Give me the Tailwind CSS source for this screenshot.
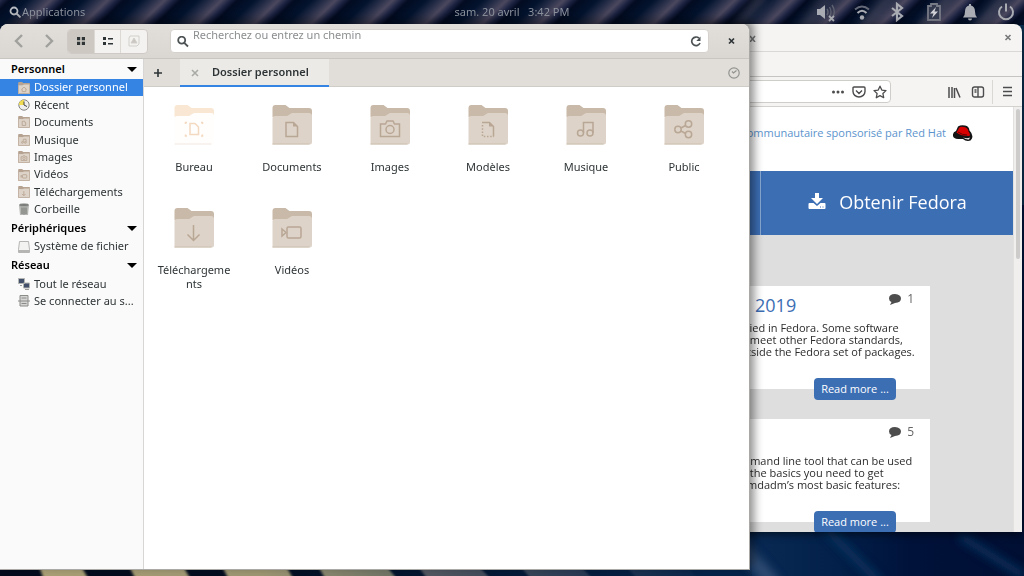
<!DOCTYPE html>
<html lang="fr">
<head>
    <meta charset="UTF-8">
    <meta name="viewport" content="width=device-width, initial-scale=1.0">
    <title>Dossier personnel</title>
    <script src="https://cdn.jsdelivr.net/npm/@tailwindcss/browser@4"></script>
</head>
<body class="relative h-screen overflow-hidden bg-[#00123a] font-['Noto_Sans','Open_Sans',sans-serif] text-[11px] text-[#2e3436]">

    <!-- Wallpaper -->
    <svg class="absolute inset-0 w-full h-full" viewBox="0 0 1024 576" preserveAspectRatio="none" aria-hidden="true">
        <defs>
            <linearGradient id="stripe"><stop offset="0" stop-color="#020b20"/><stop offset=".3" stop-color="#03132e"/><stop offset=".5" stop-color="#232b45"/><stop offset=".72" stop-color="#4b485f"/><stop offset=".88" stop-color="#1a2140"/><stop offset="1" stop-color="#020b20"/></linearGradient>
            <pattern id="top" width="57" height="60" patternUnits="userSpaceOnUse" patternTransform="translate(10 0) skewX(-46)"><rect width="57" height="60" fill="url(#stripe)"/></pattern>
            <linearGradient id="fade"><stop offset="0" stop-color="#052349" stop-opacity="0"/><stop offset=".35" stop-color="#052349" stop-opacity=".1"/><stop offset=".95" stop-color="#052349"/></linearGradient>
            <linearGradient id="navy"><stop offset="0" stop-color="#0a2a55"/><stop offset=".35" stop-color="#022049"/><stop offset=".6" stop-color="#00123a"/><stop offset="1" stop-color="#000f33"/></linearGradient>
            <filter id="soft"><feGaussianBlur stdDeviation="5"/></filter>
            <filter id="edge"><feGaussianBlur stdDeviation="1.5 0"/></filter>
        </defs>
        <rect x="740" y="300" width="284" height="276" fill="url(#navy)"/>
        <rect width="1024" height="40" fill="url(#top)"/>
        <rect x="1010" y="25" width="14" height="180" fill="#0b3050"/>
        <rect y="560" width="752" height="16" fill="#030b1c"/>
        <g filter="url(#edge)" fill="#aca176">
            <path d="M39 566h42l8 14H44zM129 566h54l8 14h-55zM222 566h64l8 14h-65zM318 566h68l12 14h-72z"/>
            <path d="M418 566h60l14 14h-64zM520 566h60l14 14h-62zM626 566h60l14 14h-62z" fill="#8b7c70"/>
        </g>
        <rect y="560" width="752" height="16" fill="url(#fade)"/>
        <g filter="url(#soft)" fill="none" stroke-width="7">
            <path d="M735 540l40 45" stroke="#48658a" stroke-width="14" opacity=".6"/>
            <path d="M825 528l55 55M960 536l64 40" stroke="#0c3560"/>
            <path d="M735 30l30-36M800 30l30-36M860 30l30-36M920 30l30-36M975 30l30-36" stroke="#766b78" opacity=".5"/>
        </g>
    </svg>

    <!-- Top bar -->
    <header class="relative flex items-center justify-between h-6 px-2 text-[#8f95a0]">
        <button class="flex items-center">
            <svg class="w-3.5 h-3" viewBox="0 0 14 12" fill="none" stroke="#b8bbc0" stroke-width="1.8"><circle cx="6" cy="5" r="3.500"/><path d="M8.500 7.500L12.500 11.500"/></svg>
            <span>Applications</span>
        </button>
        <p class="absolute left-1/2 -translate-x-1/2 whitespace-pre">sam. 20 avril   3:42 PM</p>
        <div class="flex items-center gap-4 text-[#a9acb2]">
            <svg class="w-5 h-5" viewBox="0 0 20 20" fill="currentColor"><path d="M1 7h3l5-4v14l-5-4H1z"/><path d="M11 7q2 3 0 6M13.500 5q3 5 0 10M16 3q4 6 1 12" fill="none" stroke="#5e6270" stroke-width="1.400"/><path d="M13 14l5 5M18 14l-5 5" stroke="currentColor" stroke-width="1.800"/></svg>
            <svg class="w-5 h-5" viewBox="0 0 20 20" fill="none" stroke="currentColor" stroke-width="2"><path d="M3 7.500q7-6 14 0" stroke="#656977"/><path d="M5.500 11q4.500-4.500 9 0"/><circle cx="10" cy="15.500" r="2.200" fill="currentColor" stroke="none"/></svg>
            <svg class="w-5 h-5" viewBox="0 0 20 20" fill="none" stroke="currentColor" stroke-width="2.200"><path d="M4 6l10 8-5 4V2l5 4-10 8"/></svg>
            <svg class="w-5 h-5" viewBox="0 0 20 20"><path d="M4 4h3V2h6v2h3v14H4z" fill="#343b4e" stroke="#777b86" stroke-width="1.800"/><path d="M12 5l-6 6.500h3.500L8 16l6-6.500h-3.500z" fill="#d0d2d6"/></svg>
            <svg class="w-5 h-5" viewBox="0 0 20 20" fill="currentColor"><path d="M9 2h2v1.500q4 1 4 6 0 4 2 6H3q2-2 2-6 0-5 4-6zM8 16.500h4q0 2-2 2t-2-2z"/></svg>
            <svg class="w-5 h-5" viewBox="0 0 20 20" fill="none" stroke="currentColor" stroke-width="2"><path d="M6 4.500a7 7 0 1 0 8 0M10 1.500v8"/></svg>
        </div>
    </header>

    <!-- Firefox window -->
    <section class="absolute left-[700px] right-[2px] top-6 bottom-[44px] flex flex-col overflow-hidden rounded-t-lg bg-[#f5f4f2] shadow-[0_2px_8px_rgba(0,0,0,.6)]">
        <div class="flex items-center justify-between h-7 shrink-0 border-b border-[#dad8d5] pl-[49px] pr-2.5">
            <button aria-label="Fermer l'onglet"><svg class="w-2 h-2" viewBox="0 0 8 8" stroke="#77797a" stroke-width="1.500"><path d="M1 2l5 6M6 2L1 8"/></svg></button>
            <button aria-label="Fermer"><svg class="w-2 h-2" viewBox="0 0 8 8" stroke="#77797a" stroke-width="1.600"><path d="M1.500 1l5 5M6.500 1l-5 5"/></svg></button>
        </div>
        <div class="h-[25px] shrink-0 border-b border-[#c6c4c1]"></div>
        <div class="flex items-center h-[30px] shrink-0 border-b border-[#d3d1ce] text-[#4c4c4e]">
            <div class="flex items-center justify-end gap-[7px] w-[191px] h-[23px] border border-[#cfcdca] rounded bg-white pr-[3px]">
                <svg class="w-3.5 h-3.5" viewBox="0 0 14 14" fill="currentColor"><circle cx="2.500" cy="7" r="1.500"/><circle cx="7" cy="7" r="1.500"/><circle cx="11.500" cy="7" r="1.500"/></svg>
                <svg class="w-3.5 h-3.5" viewBox="0 0 14 14" fill="none" stroke="currentColor" stroke-width="1.400"><path d="M2 2h10q1 0 1 1v3.500a6 5.500 0 0 1-12 0V3q0-1 1-1zM4 5.500l3 3 3-3"/></svg>
                <svg class="w-3.5 h-3.5" viewBox="0 0 14 14" fill="none" stroke="currentColor" stroke-width="1.300" stroke-linejoin="round"><path d="M7 1.200l1.800 3.900 4.200.5-3.100 2.900.8 4.200L7 10.600l-3.700 2.100.8-4.200L1 5.600l4.200-.5z"/></svg>
            </div>
            <div class="flex-1 flex items-center justify-end gap-2.5 h-full pr-[7px]">
                <svg class="w-3.5 h-3.5" viewBox="0 0 14 14" fill="none" stroke="currentColor" stroke-width="1.500"><path d="M2 2v11M5 2v11M7.500 3v10M9 3l4 9.500"/></svg>
                <svg class="w-3.5 h-3.5" viewBox="0 0 14 14" fill="none" stroke="currentColor" stroke-width="1.400"><rect x="1.500" y="2" width="11" height="10" rx="2"/><path d="M7 2v10M3.500 5h2M3.500 7h2"/></svg>
            </div>
            <button class="flex items-center justify-center w-[30px] h-6 border-l border-[#dad8d5]" aria-label="Menu"><svg class="w-3 h-3" viewBox="0 0 12 12" stroke="currentColor" stroke-width="1.500"><path d="M1 1.500h9M1 5.500h9M1 9.500h9"/></svg></button>
        </div>

        <div class="flex flex-1 min-h-0 font-['Open_Sans','Noto_Sans',sans-serif] text-[#2b2b2b]">
            <main class="flex-1 overflow-hidden bg-[#dedede]">
                <div class="flex items-center justify-end gap-[7px] h-16 bg-white pr-10 pb-3">
                    <a href="#" class="whitespace-nowrap text-[#5c94cd]">communautaire sponsorisé par Red Hat</a>
                    <svg class="w-5 h-4" viewBox="0 0 20 16"><path d="M0 11Q-.5 7 3 6L5 1.500q3-2 7-1 4 .5 4.500 5 4 4 2.500 8-1 2.500-4 2.500-3 0-5-2H5q-4.500-.5-5-3z" fill="#141414"/><path d="M3.500 7.500L6 3q1-2 5-1 4 .5 4.500 4.500 2 2 1 4.500-9 0-13-3.500z" fill="#d90000"/><path d="M5 7q4 3 9 3" fill="none" stroke="#600"/><path d="M10 12.500q4 1.500 7 0l-1 2q-3 .5-6-2z" fill="#e8e8e8"/></svg>
                </div>
                <div class="flex h-16 bg-[#3c6eb4] text-white">
                    <div class="w-[61px] border-r border-[#88a8d2]"></div>
                    <a href="#" class="flex-1 flex items-center justify-center gap-3 text-[18px] pb-0.5">
                        <svg class="w-5 h-5" viewBox="0 0 20 20" fill="currentColor"><path d="M8 1h4v5h4l-6 6-6-6h4z"/><path fill-rule="evenodd" d="M2.500 11h4l3.500 3 3.500-3h4q1 0 1 1v4q0 1-1 1h-15q-1 0-1-1v-4q0-1 1-1zM13 14.500v1h1v-1zM15.500 14.500v1h1v-1z"/></svg>
                        <span>Obtenir Fedora</span>
                    </a>
                </div>
                <div class="flex flex-col gap-[30px] w-[230px] pt-[51px]">
                    <article class="relative h-[103px] bg-white pl-[47px] pt-1.5">
                        <div class="flex items-start justify-between h-[30px] pr-4">
                            <h2 class="pl-2 pt-0.5 text-[18px] leading-[22px] text-[#3c6eb4]">2019</h2>
                            <p class="flex items-center gap-1.5 text-[12px] leading-[14px] text-[#666]">
                                <svg class="w-3 h-3" viewBox="0 0 12 12" fill="#4d4d4d"><path d="M6 1q6 .5 6 4.500T6 10L1 12l1.500-3Q0 8 0 5.500 0 1 6 1z"/></svg>
                                1
                            </p>
                        </div>
                        <p class="-indent-[2px] whitespace-nowrap leading-3">ried in Fedora. Some software<br>&nbsp;meet other Fedora standards,<br>tside the Fedora set of packages.</p>
                        <a href="#" class="absolute right-[34px] -bottom-[11px] flex items-center justify-center w-[82px] h-[22px] rounded bg-[#3c6eb4] text-white">Read more ...</a>
                    </article>
                    <article class="relative h-[103px] bg-white pl-[47px] pt-1.5">
                        <div class="flex items-start justify-end h-[30px] pr-4">
                            <p class="flex items-center gap-1.5 text-[12px] leading-[14px] text-[#666]">
                                <svg class="w-3 h-3" viewBox="0 0 12 12" fill="#4d4d4d"><path d="M6 1q6 .5 6 4.500T6 10L1 12l1.500-3Q0 8 0 5.500 0 1 6 1z"/></svg>
                                5
                            </p>
                        </div>
                        <p class="-indent-[7px] whitespace-nowrap leading-3">mmand line tool that can be used<br>&nbsp;the basics you need to get<br>mdadm’s most basic features:</p>
                        <a href="#" class="absolute right-[34px] -bottom-[11px] flex items-center justify-center w-[82px] h-[22px] rounded bg-[#3c6eb4] text-white">Read more ...</a>
                    </article>
                </div>
            </main>
            <div class="w-[9px] border-l border-[#e2e1df] bg-[#f0efed] px-0.5 pt-0.5">
                <div class="h-[150px] rounded-full bg-[#cdcccb]"></div>
            </div>
        </div>
    </section>

    <!-- Files window -->
    <section class="absolute left-0 w-[750px] top-6 bottom-1.5 flex flex-col overflow-hidden rounded-t-lg bg-white border-r border-b border-[#aaa9a6] shadow-[4px_-4px_10px_rgba(0,0,0,.45)]">
        <div class="flex items-center h-[35px] shrink-0 border-b border-[#c9c5c0] bg-linear-to-b from-[#e2dfdb] to-[#dad6d2] pl-[11px] pr-2.5">
            <div class="flex gap-3.5 text-[#a0a09d]">
                <button aria-label="Précédent"><svg class="w-4 h-4" viewBox="0 0 16 16" fill="none" stroke="currentColor" stroke-width="2.400"><path d="M11 2L5 8l6 6"/></svg></button>
                <button aria-label="Suivant"><svg class="w-4 h-4" viewBox="0 0 16 16" fill="none" stroke="currentColor" stroke-width="2.400"><path d="M5 2l6 6-6 6"/></svg></button>
            </div>
            <div class="flex h-[25px] ml-[10px] w-[81px] rounded border border-[#cfcac5] bg-[#f3f2f0] overflow-hidden">
                <button class="flex-1 flex items-center justify-center bg-[#cec8c2]" aria-label="Grille"><svg class="w-2 h-2" viewBox="0 0 8 8" fill="#2e3436"><path d="M0 0h3.200v3.200H0zM4.800 0H8v3.200H4.800zM0 4.800h3.200V8H0zM4.800 4.800H8V8H4.800z"/></svg></button>
                <button class="flex-1 flex items-center justify-center border-x border-[#dcd8d4]" aria-label="Liste"><svg class="w-2.5 h-2" viewBox="0 0 10 8" fill="#2e3436"><path d="M0 0h3v3H0zM0 5h3v3H0zM5 1h5v1.500H5zM5 6h5v1.500H5z"/></svg></button>
                <button class="flex-1 flex items-center justify-center" aria-label="Colonnes"><svg class="w-3 h-3" viewBox="0 0 12 12" fill="none" stroke="#d2cfcb"><path d="M2 1h9v8l-2 2H1V3z"/><path d="M6 3l3 5H3z" fill="#c9c6c2"/></svg></button>
            </div>
            <label class="flex-1 relative flex items-start h-6 ml-[22px] rounded bg-white border border-[#d5d1cc] pl-[22px]">
                <svg class="absolute left-1.5 top-1.5 w-3 h-3" viewBox="0 0 12 12" fill="none" stroke="#4d5254" stroke-width="1.800"><circle cx="4.700" cy="4.200" r="3.500"/><path d="M7.300 6.800L11 10.500"/></svg>
                <input type="text" aria-label="Chemin" placeholder="Recherchez ou entrez un chemin" class="w-full h-2.5 leading-3 outline-none placeholder:text-[#8b8e8f]">
                <svg class="absolute right-1.5 top-1.5 w-3 h-3" viewBox="0 0 12 12" fill="none" stroke="#4d5254" stroke-width="1.700"><path d="M10 7a4.300 4.300 0 1 1-1-4.800"/><path d="M10.500.5v4.500H6.300z" fill="#4d5254" stroke="none"/></svg>
            </label>
            <button class="ml-[18px] mr-1" aria-label="Fermer"><svg class="w-2 h-2" viewBox="0 0 8 8" stroke="#2e3436" stroke-width="1.700"><path d="M2 1.500l5 5M7 1.500l-5 5"/></svg></button>
        </div>

        <div class="flex flex-1 min-h-0">
            <!-- Sidebar -->
            <nav class="w-36 shrink-0 border-r border-[#d8d6d4] bg-[#fafafa]">
                <button class="flex items-center justify-between w-full h-5 pl-[11px] pr-1.5 font-semibold text-black">Personnel <svg class="w-2.5 h-[5px]" viewBox="0 0 10 5"><path d="M0 0h10L5 5z"/></svg></button>
                <div id="personnel" class="grid grid-rows-8 h-[139px]"></div>
                <button class="flex items-center justify-between w-full h-5 pl-[11px] pr-1.5 font-semibold text-black">Périphériques <svg class="w-2.5 h-[5px]" viewBox="0 0 10 5"><path d="M0 0h10L5 5z"/></svg></button>
                <div id="devices" class="grid h-[17px]"></div>
                <button class="flex items-center justify-between w-full h-5 pl-[11px] pr-1.5 font-semibold text-black">Réseau <svg class="w-2.5 h-[5px]" viewBox="0 0 10 5"><path d="M0 0h10L5 5z"/></svg></button>
                <div id="network" class="grid grid-rows-2 h-[35px]"></div>
            </nav>

            <div class="flex-1">
                <div class="flex items-center h-7 border-b border-[#d0ccc8] bg-[#e1deda]">
                    <button class="w-9 flex items-center justify-center pr-2" aria-label="Nouvel onglet"><svg class="w-2 h-2" viewBox="0 0 8 8" stroke="#2e3436" stroke-width="1.600"><path d="M4 0v8M0 4h8"/></svg></button>
                    <div class="flex items-center gap-[13px] w-[149px] h-7 border-b-2 border-[#3584e4] bg-[#ebeae7] pl-[11px] pt-0.5">
                        <svg class="w-2 h-2" viewBox="0 0 8 8" stroke="#a9a9a6" stroke-width="1.600"><path d="M1 1l6 6M7 1L1 7"/></svg>
                        <span class="font-semibold">Dossier personnel</span>
                    </div>
                    <svg class="w-3 h-3 ml-auto mr-[9px]" viewBox="0 0 12 12" fill="none" stroke="#92938f" stroke-width="1.200"><circle cx="6" cy="6" r="5.200"/><path d="M4 4.500L5.500 6l3-2.500"/></svg>
                </div>
                <div id="files" class="grid grid-cols-[repeat(auto-fill,98px)] auto-rows-[103px] pl-px pt-[18px]"></div>
            </div>
        </div>
    </section>

    <script>
        const glyphs = {
            doc: '<path d="M14 17.500h7.500l4 4v10H14z"/><path d="M21 17v4.500h5z" fill="#b9a795" stroke="none"/>',
            camera: '<path d="M10.500 19h5l1.500-3h6l1.500 3h5v12.500h-19z"/><circle cx="20" cy="24.500" r="4"/>',
            template: '<path d="M14 17.500h7.500l4 4v10"/><path d="M21 17v4.500h5z" fill="#b9a795" stroke="none"/><path d="M14.500 20v11.500H26" stroke-dasharray="1.500 1.700"/>',
            music: '<circle cx="14.500" cy="28" r="3"/><circle cx="24" cy="28" r="3"/><path d="M17.500 28V17.500H27V28"/>',
            share: '<circle cx="14" cy="24.500" r="3.200"/><circle cx="24.500" cy="19" r="3.200"/><circle cx="24.500" cy="29.500" r="3.200"/><path d="M17 23l4.500-2.500M17 26l4.500 2.500"/>',
            down: '<path d="M19.500 17v15M13.500 26.500l6 6 6-6"/>',
            video: '<rect x="15" y="19" width="14" height="11" rx="1.500"/><path d="M10 21l4 3.500-4 3.500z"/>',
            home: '<path d="M11 25l9-8 9 8M14 24v8h12v-8"/>',
            desktop: '<path d="M16 18.500h5l3.500 3.500v7.500H16z"/><path d="M11.500 19v-1.500H13M27 17.500h1.500V19M28.500 29.500V31H27M13 31h-1.500v-1.500"/>'
        };

        const folder = (glyph, size) => {
            const pale = glyph === 'desktop';
            const mini = size === 'w-3 h-3';
            return `<svg class="${size}" viewBox="0 0 40 40" fill="none">
                <path d="M.5 12V3q0-3 3-3h10l4 3H37q3 0 3 3v7z" fill="${pale ? '#f9e7d3' : mini ? '#b5a290' : '#c9b9a8'}"/>
                <path d="M.5 13q0-2 3-2H15l5-3h17q3 0 3 3v26q0 2.500-2.500 2.500H.5z" fill="${pale ? '#fffefd' : '#ded3c8'}"/>
                <path d="M.5 39h37" stroke="${pale ? '#f1e9e1' : '#cdbfb1'}"/>
                ${mini ? '<path d="M1.500 10v28.500h37V10" stroke="#bfae9d" stroke-width="3"/>' : ''}
                <g stroke="${pale ? '#f3d9c0' : '#b9a795'}" stroke-width="${mini ? 3 : 1.5}">${glyphs[glyph]}</g></svg>`;
        };

        const icons = {
            recent: '<svg class="w-3 h-3" viewBox="0 0 12 12"><circle cx="6" cy="6" r="5.200" fill="#eeeeec" stroke="#81837d"/><path d="M6 6H.8A5.200 5.200 0 0 1 6 .8z" fill="#f0dc50"/><path d="M6 2.500V6l3 1.500" fill="none" stroke="#444"/></svg>',
            trash: '<svg class="w-3 h-3" viewBox="0 0 12 12"><path d="M1 2h10l-1 10H2z" fill="#b5b7b3"/><ellipse cx="6" cy="2" rx="5" ry="1.600" fill="#7b7e7a" stroke="#b5b7b3" stroke-width=".6"/><path d="M4 4.500v6.500M6 4.500v7M8 4.500v6.500" stroke="#747773"/></svg>',
            drive: '<svg class="w-3 h-3" viewBox="0 0 12 12"><path d="M1.500.5h9l1 8v3H.5v-3z" fill="#f3f3f2" stroke="#a3a5a2" stroke-width=".8"/><path d="M1 9h10v2H1z" fill="#b4b6b3"/></svg>',
            network: '<svg class="w-3 h-3" viewBox="0 0 12 12"><path d="M.5.5h6v5h-6zM5.500 5h6v5h-6z" fill="#42506c" stroke="#b4b6b3"/><path d="M2 7.500h2M7 11.500h4" stroke="#999b98"/></svg>',
            server: '<svg class="w-3 h-3" viewBox="0 0 12 12"><path d="M2 .5h8V11H2z" fill="#d5d6d4" stroke="#8a8c88"/><path d="M3.500 3h5M0 6h12M3.500 8.500h5" stroke="#8a8c88"/></svg>'
        };

        const row = ([label, icon], active) => `
            <a href="#" class="flex items-center gap-1 pl-[18px] whitespace-nowrap ${active ? 'bg-[#3584e4] text-white' : ''}">
                <span class="shrink-0">${icons[icon] || folder(icon, 'w-3 h-3')}</span><span>${label}</span>
            </a>`;

        document.getElementById('personnel').innerHTML = [
            ['Dossier personnel', 'home'], ['Récent', 'recent'], ['Documents', 'doc'], ['Musique', 'music'],
            ['Images', 'camera'], ['Vidéos', 'video'], ['Téléchargements', 'down'], ['Corbeille', 'trash']
        ].map((item, i) => row(item, i === 0)).join('');
        document.getElementById('devices').innerHTML = row(['Système de fichier', 'drive']);
        document.getElementById('network').innerHTML = row(['Tout le réseau', 'network']) + row(['Se connecter au s...', 'server']);

        document.getElementById('files').innerHTML = [
            ['Bureau', 'desktop'], ['Documents', 'doc'], ['Images', 'camera'], ['Modèles', 'template'],
            ['Musique', 'music'], ['Public', 'share'], ['Téléchargements', 'down'], ['Vidéos', 'video']
        ].map(([label, icon]) => `
            <a href="#" class="flex flex-col items-center gap-[15px]">
                ${folder(icon, 'w-10 h-10')}
                <span class="w-[74px] text-center leading-[14px] wrap-anywhere">${label}</span>
            </a>`).join('');
    </script>
</body>
</html>
